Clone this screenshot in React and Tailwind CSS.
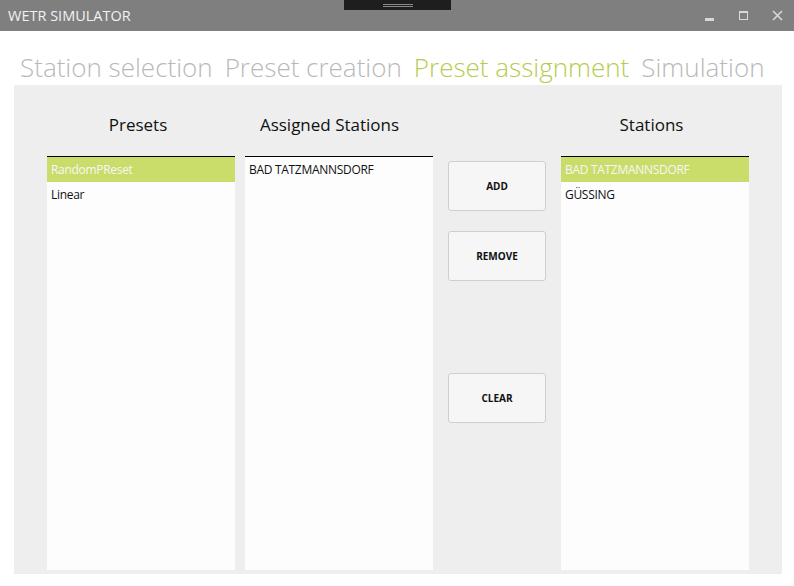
import React from 'react';

const font = { fontFamily: '"Open Sans", "Noto Sans", sans-serif' };

const ListBox = ({ items, selected }) => (
  <div className="h-[414px] w-[188px] bg-[#fdfdfd] border-t border-black">
    {items.map((item, i) => (
      <div
        key={item}
        className={
          i === selected
            ? 'h-[25px] pl-[4px] flex items-center text-[12px] tracking-[-0.3px] bg-[#cadc6a] text-[#f7f7f7]'
            : 'h-[25px] pl-[4px] flex items-center text-[12px] tracking-[-0.3px] text-[#111]'
        }
      >
        {item}
      </div>
    ))}
  </div>
);

const Column = ({ title, shift, children }) => (
  <div className="flex flex-col w-[188px]">
    <div className={'h-[71px] pt-[28px] text-center text-[17px] leading-[24px] text-[#111] ' + shift}>{title}</div>
    {children}
  </div>
);

const ActionButton = ({ label, className }) => (
  <button
    className={
      'w-[98px] h-[50px] rounded-[3px] border border-[#cfcfcf] bg-[#f6f6f6] text-[10px] font-bold text-[#111] ' +
      (className || '')
    }
  >
    {label}
  </button>
);

export default function App() {
  const tabs = [
    { name: 'Station selection', active: false },
    { name: 'Preset creation', active: false },
    { name: 'Preset assignment', active: true },
    { name: 'Simulation', active: false },
  ];

  return (
    <div className="w-[794px] h-[586px] bg-white flex flex-col overflow-hidden" style={font}>
      {/* title bar */}
      <div className="relative h-[31px] bg-[#7f7f7f] flex items-center justify-between pl-[8px]">
        <span className="text-[14.5px] text-[#f2f2f2]">WETR SIMULATOR</span>
        <div className="absolute left-[344px] top-0 w-[107px] h-[10px] bg-[#1e1e1e] flex flex-col items-center pt-[4px] gap-[1px]">
          <div className="w-[30px] h-[1px] bg-[#8a8a8a]" />
          <div className="w-[30px] h-[1px] bg-[#8a8a8a]" />
        </div>
        <div className="flex items-center h-full">
          <div className="w-[34px] h-full flex items-end justify-center pb-[10px]">
            <div className="w-[9px] h-[3px] bg-[#d8d8d8]" />
          </div>
          <div className="w-[34px] h-full flex items-center justify-center">
            <div className="w-[9px] h-[9px] border border-[#d8d8d8] border-t-[2px]" />
          </div>
          <div className="w-[34px] h-full flex items-center justify-center">
            <svg width="11" height="11" viewBox="0 0 11 11">
              <path d="M1 1L10 10M10 1L1 10" stroke="#d8d8d8" strokeWidth="1.6" />
            </svg>
          </div>
        </div>
      </div>

      {/* tabs */}
      <div className="h-[54px] flex items-end pl-[20px] gap-[12px] pb-[1px]">
        {tabs.map((t) => (
          <span
            key={t.name}
            className={
              t.active
                ? 'text-[26px] font-light leading-[34px] text-[#b5cc4f]'
                : 'text-[26px] font-light leading-[34px] text-[#b9b9b9]'
            }
          >
            {t.name}
          </span>
        ))}
      </div>

      {/* main panel */}
      <div className="ml-[14px] w-[768px] h-[489px] bg-[#eeeeee] flex px-[33px] pb-[4px]">
        <Column title="Presets" shift="pr-[6px]">
          <ListBox items={['RandomPReset', 'Linear']} selected={0} />
        </Column>
        <div className="w-[10px]" />
        <Column title="Assigned Stations" shift="pr-[19px]">
          <ListBox items={['BAD TATZMANNSDORF']} selected={-1} />
        </Column>
        <div className="flex flex-col mx-[15px] pt-[76px]">
          <ActionButton label="ADD" />
          <ActionButton label="REMOVE" className="mt-[20px]" />
          <ActionButton label="CLEAR" className="mt-[92px]" />
        </div>
        <Column title="Stations" shift="pr-[7px]">
          <ListBox items={['BAD TATZMANNSDORF', 'GÜSSING']} selected={0} />
        </Column>
      </div>
    </div>
  );
}
